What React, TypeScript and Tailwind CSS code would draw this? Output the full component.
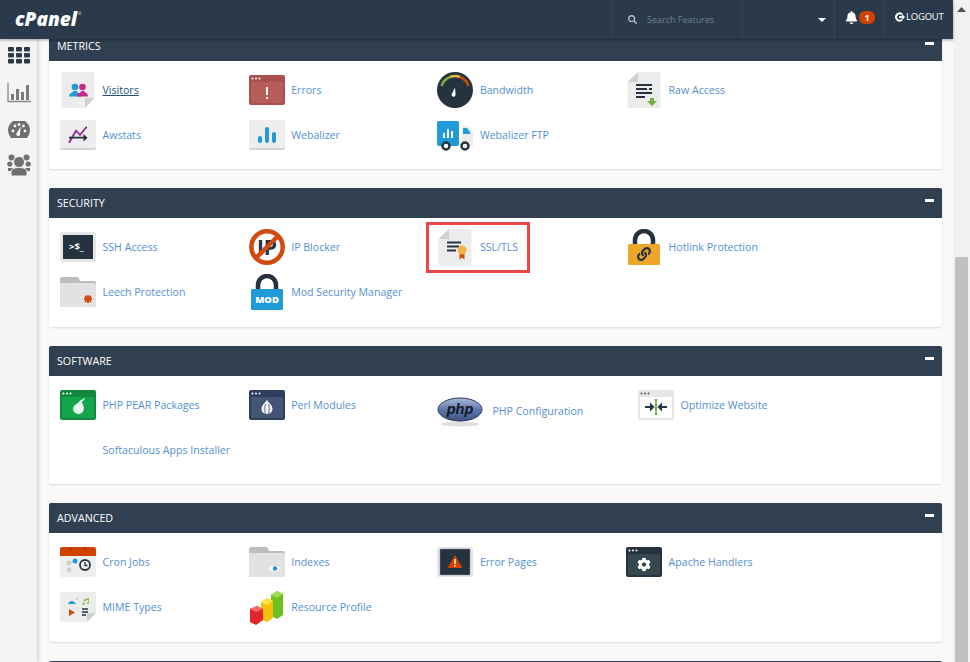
import type { ReactNode } from "react"
import { FaBell, FaCog, FaLink, FaMusic, FaSearch } from "react-icons/fa"

interface Tool {
  label: string
  icon?: ReactNode
  active?: boolean
  selected?: boolean
  wide?: boolean
}

interface Section {
  title: string
  tools: Tool[]
}

const Box = ({ children, width = 36 }: { children: ReactNode; width?: number }) => (
  <svg width={width} height="36" viewBox={`0 0 ${width} 36`} className="block shrink-0">
    {children}
  </svg>
)

const Tile = ({ children }: { children?: ReactNode }) => (
  <Box>
    <rect x="0" y="3" width="36" height="30" rx="2" fill="#d4d4d4" />
    <rect x="0" y="3" width="36" height="28" rx="2" fill="#eeeeee" />
    {children}
  </Box>
)

const Win = ({ outer, inner, children }: { outer: string; inner: string; children?: ReactNode }) => (
  <Box>
    <rect x="0" y="3" width="36" height="30" rx="2" fill={outer} />
    <rect x="2" y="10" width="32" height="21" rx="1" fill={inner} />
    <circle cx="3.5" cy="6.5" r="1" fill="#fff" />
    <circle cx="7" cy="6.5" r="1" fill="#fff" />
    <circle cx="10.5" cy="6.5" r="1" fill="#fff" />
    {children}
  </Box>
)

const Page = ({ children, foldBottom }: { children?: ReactNode; foldBottom?: boolean }) => (
  <Box>
    {foldBottom ? (
      <>
        <path d="M3 0h30a1.500 1.500 0 0 1 1.500 1.500V26L25 36H3a1.500 1.500 0 0 1-1.500-1.500V1.500A1.500 1.500 0 0 1 3 0z" fill="#ececec" />
        <path d="M34.500 26H27a2 2 0 0 0-2 2v8z" fill="#d0d0d0" />
      </>
    ) : (
      <>
        <path d="M12 0h21a1.500 1.500 0 0 1 1.500 1.500v33A1.500 1.500 0 0 1 33 36H3a1.500 1.500 0 0 1-1.500-1.500V10z" fill="#ececec" />
        <path d="M12 0L1.500 10H12z" fill="#d0d0d0" />
      </>
    )}
    {children}
  </Box>
)

const Folder = ({ children }: { children?: ReactNode }) => (
  <Box>
    <path d="M2 3h15a2 2 0 0 1 2 1.500L20 7h14a2 2 0 0 1 2 2v22a2 2 0 0 1-2 2H2a2 2 0 0 1-2-2V5a2 2 0 0 1 2-2z" fill="#bdbdbd" />
    <path d="M0 9h34a2 2 0 0 1 2 2v20a2 2 0 0 1-2 2H2a2 2 0 0 1-2-2z" fill="#e2e2e2" />
    {children}
  </Box>
)

const Lock = ({ body, children }: { body: string; children?: ReactNode }) => (
  <Box>
    <path d="M9 17V11a9 9 0 0 1 18 0v6" fill="none" stroke="#25323f" strokeWidth="4.500" />
    <rect x="2" y="15" width="32" height="21" rx="1.500" fill={body} />
    {children}
  </Box>
)

const sections: Section[] = [
  {
    title: "Metrics",
    tools: [
      {
        label: "Visitors",
        active: true,
        icon: (
          <Page foldBottom>
            <circle cx="15" cy="15" r="3.300" fill="#1e9bd8" />
            <path d="M9 24.500c0-3 2.500-3.500 4-4.500v-1h4v1c1.500 1 4 1.500 4 4.500z" fill="#1e9bd8" />
            <circle cx="22.500" cy="15" r="3.300" fill="#c62b8a" />
            <path d="M17 24.500c0-3 2.500-3.500 4-4.500v-1h3.500v1c1.500 1 3.500 1.500 3.500 4.500z" fill="#c62b8a" />
          </Page>
        ),
      },
      {
        label: "Errors",
        icon: (
          <Win outer="#a94f4c" inner="#b65c59">
            <rect x="17" y="15" width="2" height="8" fill="#fff" />
            <rect x="17" y="25" width="2" height="2" fill="#fff" />
          </Win>
        ),
      },
      {
        label: "Bandwidth",
        icon: (
          <Box>
            <circle cx="18" cy="18" r="18" fill="#25323f" />
            <path d="M4.500 14A14.500 14.500 0 0 1 13 5" fill="none" stroke="#7fa93f" strokeWidth="2.500" />
            <path d="M13 5A14.500 14.500 0 0 1 23 5" fill="none" stroke="#e9b63d" strokeWidth="2.500" />
            <path d="M23 5A14.500 14.500 0 0 1 31.500 14" fill="none" stroke="#d04a00" strokeWidth="2.500" />
            <path d="M18 15.500l.5 6.500a2 2 0 1 1-3.500-.5z" fill="#fff" />
          </Box>
        ),
      },
      {
        label: "Raw Access",
        icon: (
          <Page>
            <rect x="10" y="12" width="16" height="2" fill="#25323f" />
            <rect x="10" y="16" width="11" height="2" fill="#25323f" />
            <rect x="23" y="16" width="3" height="2" fill="#25323f" />
            <rect x="10" y="20" width="16" height="2" fill="#25323f" />
            <rect x="10" y="24" width="9" height="2" fill="#25323f" />
            <path d="M24 26h4v3h3l-5 5-5-5h3z" fill="#6fae45" />
          </Page>
        ),
      },
      {
        label: "Awstats",
        icon: (
          <Tile>
            <path d="M9 25.700L16 13.700l4 4.300 6.700-8.300" fill="none" stroke="#8e2a8b" strokeWidth="1.800" />
            <path d="M9 20.700h15" stroke="#25323f" strokeWidth="1.800" />
            <path d="M23.500 17l4 3.700-4 3.700z" fill="#25323f" />
          </Tile>
        ),
      },
      {
        label: "Webalizer",
        icon: (
          <Tile>
            <rect x="9" y="19" width="4" height="7" rx="2" fill="#1e9bd8" />
            <rect x="16" y="10" width="4" height="16" rx="2" fill="#1e9bd8" />
            <rect x="23" y="15" width="4" height="11" rx="2" fill="#1e9bd8" />
          </Tile>
        ),
      },
      {
        label: "Webalizer FTP",
        icon: (
          <Box>
            <path d="M25 9h6l5 6v14H25z" fill="#ececec" />
            <path d="M26 11h4l3 4v2h-7z" fill="#1e9bd8" />
            <rect x="0" y="4" width="22" height="25" rx="2" fill="#1e9bd8" />
            <rect x="6" y="16" width="2" height="5" fill="#fff" />
            <rect x="10" y="12" width="2" height="9" fill="#fff" />
            <rect x="14" y="14" width="2" height="7" fill="#fff" />
            <circle cx="9" cy="29" r="3.500" fill="#fff" stroke="#25323f" strokeWidth="2.500" />
            <circle cx="28" cy="29" r="3.500" fill="#fff" stroke="#25323f" strokeWidth="2.500" />
          </Box>
        ),
      },
    ],
  },
  {
    title: "Security",
    tools: [
      {
        label: "SSH Access",
        icon: (
          <Box>
            <rect x="0" y="3" width="36" height="30" rx="2" fill="#e6e6e6" />
            <rect x="3" y="6" width="30" height="24" fill="#25323f" />
            <text x="9" y="21" fontSize="9.500" fontWeight="700" fill="#fff" fontFamily="Open Sans, sans-serif">
              {">$_"}
            </text>
          </Box>
        ),
      },
      {
        label: "IP Blocker",
        icon: (
          <Box>
            <text x="18" y="26" textAnchor="middle" fontSize="21" fontWeight="700" fill="#25323f" fontFamily="Open Sans, sans-serif">
              IP
            </text>
            <circle cx="18" cy="18" r="15.700" fill="none" stroke="#d04a12" strokeWidth="4.500" />
            <path d="M29 7L7 29" stroke="#d04a12" strokeWidth="4.500" />
          </Box>
        ),
      },
      {
        label: "SSL/TLS",
        selected: true,
        icon: (
          <Page>
            <rect x="10" y="12.500" width="14" height="2" fill="#25323f" />
            <rect x="10" y="16.500" width="12" height="2" fill="#25323f" />
            <rect x="10" y="20.500" width="9" height="2" fill="#25323f" />
            <path d="M22.500 23h5v7.500l-2.500-2-2.500 2z" fill="#d04a12" />
            <circle cx="25" cy="21" r="4.500" fill="#f2b544" />
          </Page>
        ),
      },
      {
        label: "Hotlink Protection",
        icon: (
          <Lock body="#eda72a">
            <g transform="translate(11 18)">
              <FaLink size={14} color="#25323f" />
            </g>
          </Lock>
        ),
      },
      {
        label: "Leech Protection",
        icon: (
          <Folder>
            <path d="M28 21v8M24 25h8M25 22l6 6M31 22l-6 6" stroke="#d04a12" strokeWidth="1.800" />
          </Folder>
        ),
      },
      {
        label: "Mod Security Manager",
        icon: (
          <Lock body="#1e9bd8">
            <text x="18" y="29" textAnchor="middle" fontSize="9.500" fontWeight="800" fill="#fff" fontFamily="Open Sans, sans-serif">
              MOD
            </text>
          </Lock>
        ),
      },
    ],
  },
  {
    title: "Software",
    tools: [
      {
        label: "PHP PEAR Packages",
        icon: (
          <Win outer="#118a3f" inner="#14a54c">
            <path d="M21 13c1 0 2-1 4-2-.5 2-1.500 3-3 3.500 0 3 3 5 1.500 9-1 3-4.500 4-7 3-3-1-4-4-3-6.500.7-2 3-3 4.500-4 .5-1 1.500-2 3-3z" fill="#e9f5ee" />
          </Win>
        ),
      },
      {
        label: "Perl Modules",
        icon: (
          <Win outer="#2f3e5c" inner="#445473">
            <path d="M18 12c0 3 5.500 5 5.500 10 0 3-2.500 5-5.500 5s-5.500-2-5.500-5c0-5 5.500-7 5.500-10z" fill="#f2f2f2" />
            <path d="M16.500 17c-1 3-1 7 0 10M19.500 17c1 3 1 7 0 10" stroke="#445473" strokeWidth="0.800" fill="none" />
          </Win>
        ),
      },
      {
        label: "PHP Configuration",
        wide: true,
        icon: (
          <Box width={48}>
            <defs>
              <linearGradient id="phpFill" x1="0" y1="0" x2="0" y2="1">
                <stop offset="0" stopColor="#a9b8d8" />
                <stop offset="0.5" stopColor="#5f79ad" />
                <stop offset="1" stopColor="#3c5284" />
              </linearGradient>
            </defs>
            <ellipse cx="23" cy="31" rx="19" ry="2.500" fill="#dedede" />
            <ellipse cx="23" cy="16.500" rx="22" ry="11.500" fill="url(#phpFill)" stroke="#2c3a58" strokeWidth="1" />
            <text x="23" y="21" textAnchor="middle" fontSize="14.500" fontStyle="italic" fontWeight="700" fill="#14181f" fontFamily="Liberation Sans, sans-serif">
              php
            </text>
          </Box>
        ),
      },
      {
        label: "Optimize Website",
        icon: (
          <Box>
            <rect x="0" y="3" width="36" height="30" rx="2" fill="#e6e6e6" />
            <rect x="2" y="10" width="32" height="21" fill="#fff" />
            <circle cx="3.500" cy="6.500" r="1" fill="#555" />
            <circle cx="7" cy="6.500" r="1" fill="#555" />
            <circle cx="10.500" cy="6.500" r="1" fill="#555" />
            <path d="M7 20h6M29 20h-6" stroke="#25323f" strokeWidth="2" />
            <path d="M12 15.500l4.500 4.500-4.500 4.500zM24 15.500L19.500 20l4.500 4.500z" fill="#25323f" />
            <path d="M17 12c2 5 2 11 0 16M19 12c-2 5-2 11 0 16" fill="none" stroke="#6fae45" strokeWidth="1.200" />
          </Box>
        ),
      },
      { label: "Softaculous Apps Installer" },
    ],
  },
  {
    title: "Advanced",
    tools: [
      {
        label: "Cron Jobs",
        icon: (
          <Box>
            <rect x="0" y="3" width="36" height="30" rx="2" fill="#eeeeee" />
            <path d="M2 3h32a2 2 0 0 1 2 2v7H0V5a2 2 0 0 1 2-2z" fill="#d04200" />
            <circle cx="11" cy="5" r="1.500" fill="#a93600" />
            <circle cx="25" cy="5" r="1.500" fill="#a93600" />
            <circle cx="9" cy="19" r="2.500" fill="#cfcfcf" />
            <circle cx="15" cy="17" r="2.500" fill="#1e9bd8" />
            <circle cx="9" cy="26" r="2.500" fill="#cfcfcf" />
            <circle cx="25" cy="21" r="5" fill="#eeeeee" stroke="#25323f" strokeWidth="1.800" />
            <path d="M25 18v3.500h2.500" fill="none" stroke="#25323f" strokeWidth="1.300" />
          </Box>
        ),
      },
      {
        label: "Indexes",
        icon: (
          <Folder>
            <path d="M20 24.500c3-3.800 9-3.800 12 0-3 3.800-9 3.800-12 0z" fill="#fff" />
            <circle cx="26" cy="24.500" r="2.200" fill="#1e9bd8" />
          </Folder>
        ),
      },
      {
        label: "Error Pages",
        icon: (
          <Box>
            <rect x="0" y="3" width="36" height="30" rx="2" fill="#e6e6e6" />
            <rect x="3" y="5" width="30" height="26" fill="#25323f" stroke="#8a8f96" strokeWidth="0.500" />
            <path d="M18 11l7.500 13h-15z" fill="#d04200" />
            <rect x="17.300" y="15" width="1.400" height="5" fill="#fff" />
            <rect x="17.300" y="21" width="1.400" height="1.400" fill="#fff" />
          </Box>
        ),
      },
      {
        label: "Apache Handlers",
        icon: (
          <Win outer="#25323f" inner="#37474f">
            <g transform="translate(11 13.500)">
              <FaCog size={14} color="#fff" />
            </g>
          </Win>
        ),
      },
      {
        label: "MIME Types",
        icon: (
          <Box>
            <path d="M2 3h34v21l-9 9H2a2 2 0 0 1-2-2V5a2 2 0 0 1 2-2z" fill="#ececec" />
            <path d="M36 24h-7a2 2 0 0 0-2 2v7z" fill="#d0d0d0" />
            <path d="M8 15c1-2 2-3 4-3 2 0 3 2 4 3z" fill="#1e9bd8" />
            <circle cx="17" cy="10" r="0.800" fill="#eda72a" />
            <g transform="translate(22 9)">
              <FaMusic size={7} color="#8fbf5a" />
            </g>
            <path d="M9 20l6 3.500-6 3.500z" fill="#d04a12" />
            <path d="M22 20h6M22 23h6M22 26h4" stroke="#25323f" strokeWidth="1.300" />
          </Box>
        ),
      },
      {
        label: "Resource Profile",
        icon: (
          <Box>
            <path d="M22 6l6-4 6 3v21l-6 4-6-3z" fill="#6cc024" />
            <path d="M22 6l6 3 6-4-6-3z" fill="#9be04a" />
            <path d="M12 13l6-4 6 3v17l-6 4-6-3z" fill="#f4c20d" />
            <path d="M12 13l6 3 6-4-6-3z" fill="#fde34a" />
            <path d="M1 20l7-3 6 3v11l-7 5-6-3z" fill="#e4252b" />
            <path d="M1 20l6 3 7-3-6-3z" fill="#f7686b" />
          </Box>
        ),
      },
    ],
  },
]

const ToolItem = ({ tool }: { tool: Tool }) => (
  <div className={`relative flex h-[45px] items-center ${tool.wide ? "w-[200.6px] gap-[7px] pt-3" : "w-[188.7px] gap-[6.5px]"}`}>
    {tool.icon ?? <span className="h-9 w-9 shrink-0" />}
    <a className={`text-[10.6px] leading-4 ${tool.active ? "text-[#23527c] underline" : "text-[#5590d0]"}`}>{tool.label}</a>
    {tool.selected && (
      <span className="absolute -left-[11px] -top-[3px] h-[51px] w-[104px] border-[3px] border-[#e8484a]" />
    )}
  </div>
)

const Panel = ({ section }: { section: Section }) => (
  <section className="overflow-hidden rounded-[2px] bg-white shadow-[0_1px_2px_rgba(0,0,0,0.12)]">
    <header className="flex h-[30px] items-center justify-between bg-[#304050] pl-2 pr-2">
      <h2 className="text-[10.7px] font-normal uppercase text-white">{section.title}</h2>
      <span className="mb-[5px] h-[3px] w-[9px] bg-white" />
    </header>
    <div className="flex h-[108.5px] flex-wrap content-start pl-[11px] pt-[6.3px]">
      {section.tools.map((tool) => (
        <ToolItem key={tool.label} tool={tool} />
      ))}
    </div>
  </section>
)

const TopBar = () => (
  <header className="relative z-20 flex h-[39px] shrink-0 items-stretch bg-[#2a3a4b] text-white shadow-[0_1px_3px_rgba(0,0,0,0.35)]">
    <div className="flex flex-1 items-center pl-[15px]">
      <span className="text-[19px] font-extrabold italic leading-none">cPanel</span>
      <span className="mb-3 ml-[1px] text-[4px]">®</span>
    </div>
    <div className="flex w-[131px] items-center gap-[10px] border-x border-[#334455] pl-[15px]">
      <FaSearch size={9} className="text-[#b4bcc5]" />
      <span className="text-[9px] text-[#6f7f8f]">Search Features</span>
    </div>
    <div className="flex w-[91px] items-center justify-end pr-[8px]">
      <svg width="8" height="4" viewBox="0 0 8 4">
        <path d="M0 0h8L4 4z" fill="#fff" />
      </svg>
    </div>
    <div className="flex w-[50px] items-center gap-[1px] border-x border-[#334455] pb-[4px] pl-[10px]">
      <FaBell size={13} />
      <span className="flex h-[13px] w-[16px] items-center justify-center rounded-[6px] bg-[#d04200] text-[9px] font-bold">1</span>
    </div>
    <div className="flex w-[69px] items-center gap-[1px] pb-[5px] pl-[11px]">
      <svg width="10" height="10" viewBox="0 0 10 10">
        <path d="M7 2.200A3.600 3.600 0 1 0 7 7.800" fill="none" stroke="#fff" strokeWidth="2" />
        <path d="M4 4h3V2l3 3-3 3V6H4z" fill="#fff" />
      </svg>
      <span className="text-[9.5px] tracking-[-0.2px]">LOGOUT</span>
    </div>
  </header>
)

const SideBar = () => (
  <aside className="relative z-10 flex w-[37px] shrink-0 flex-col items-center bg-[#f4f4f4] shadow-[1px_0_4px_rgba(0,0,0,0.2)]">
    <svg width="22" height="17" viewBox="0 0 22 17" className="mt-[8px]">
      {[0, 6, 12].map((y) =>
        [0, 8, 16].map((x) => <rect key={`${x}-${y}`} x={x} y={y} width="6" height="4.500" rx="1" fill="#2a3a4b" />),
      )}
    </svg>
    <svg width="24" height="20" viewBox="0 0 24 20" className="mt-[19px]">
      <path d="M1 0v18.500h23" fill="none" stroke="#8a8a8a" strokeWidth="1.300" />
      <rect x="4" y="11" width="3" height="6" fill="#7a7a7a" />
      <rect x="9" y="6" width="3" height="11" fill="#7a7a7a" />
      <rect x="14" y="9" width="3" height="8" fill="#7a7a7a" />
      <rect x="19" y="2" width="3" height="15" fill="#7a7a7a" />
    </svg>
    <svg width="22" height="18" viewBox="0 0 22 18" className="mt-[18px]">
      <path d="M3 17a11 11 0 1 1 16 0z" fill="#6f6f6f" />
      <circle cx="5" cy="10" r="1.400" fill="#f4f4f4" />
      <circle cx="7" cy="5" r="1.400" fill="#f4f4f4" />
      <circle cx="11" cy="3.500" r="1.400" fill="#f4f4f4" />
      <circle cx="15.500" cy="5" r="1.400" fill="#f4f4f4" />
      <circle cx="17" cy="10" r="1.400" fill="#f4f4f4" />
      <path d="M13 5l-1 7a2 2 0 1 1-3-.5z" fill="#f4f4f4" />
    </svg>
    <svg width="24" height="22" viewBox="0 0 24 22" className="mt-[15px]">
      <circle cx="4.500" cy="3.500" r="3" fill="#6f6f6f" />
      <circle cx="19.500" cy="3.500" r="3" fill="#6f6f6f" />
      <circle cx="2.800" cy="10" r="2.600" fill="#6f6f6f" />
      <circle cx="21.200" cy="10" r="2.600" fill="#6f6f6f" />
      <path d="M1 14h6v3H1zM17 14h6v3h-6z" fill="#6f6f6f" />
      <circle cx="12" cy="8" r="5.500" fill="#6f6f6f" stroke="#f4f4f4" strokeWidth="1" />
      <path d="M4 22v-4c0-3 3-4.500 8-4.500s8 1.500 8 4.500v4z" fill="#6f6f6f" stroke="#f4f4f4" strokeWidth="1" />
    </svg>
  </aside>
)

const ScrollBar = () => (
  <div className="flex h-full w-[17px] shrink-0 flex-col items-center bg-[#f1f1f1]">
    <svg width="9" height="5" viewBox="0 0 9 5" className="mt-[7px]">
      <path d="M0 5L4.500 0 9 5z" fill="#505050" />
    </svg>
    <div className="mt-[245px] w-[13px] flex-1 bg-[#c1c1c1]" />
  </div>
)

export default function App() {
  return (
    <div className="flex h-[662px] w-[970px] overflow-hidden bg-[#f9f9f9] font-['Open_Sans',sans-serif]">
      <div className="flex min-w-0 flex-1 flex-col">
        <TopBar />
        <div className="flex min-h-0 flex-1">
          <SideBar />
          <main className="min-w-0 flex-1 overflow-hidden pl-[12px] pr-[11px]">
            <div className="-mt-[8.2px] flex flex-col gap-[19px]">
              {sections.map((section) => (
                <Panel key={section.title} section={section} />
              ))}
              <div className="h-[30px] rounded-[2px] bg-[#304050]" />
            </div>
          </main>
        </div>
      </div>
      <ScrollBar />
    </div>
  )
}
